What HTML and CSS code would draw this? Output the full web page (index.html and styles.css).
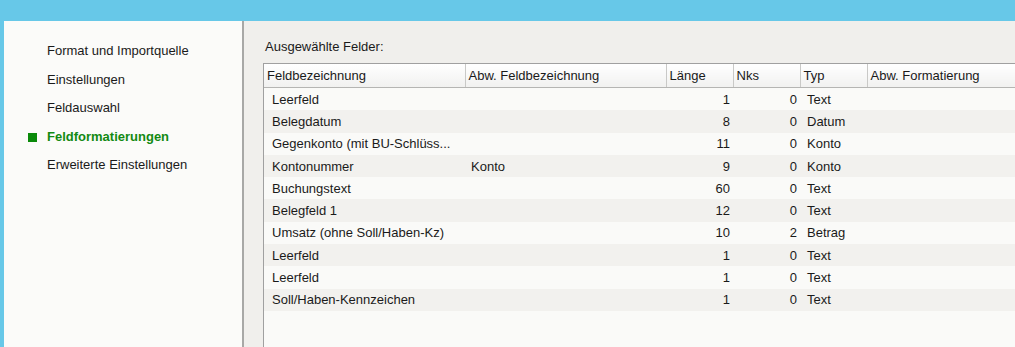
FILE: index.html
```html
<!DOCTYPE html>
<html lang="de">
<head>
  <meta charset="UTF-8" />
  <title>Feldformatierungen</title>
  <link rel="stylesheet" href="styles.css">
</head>
<body>
  <div class="titlebar"></div>
  <div class="window">
    <nav class="steps">
      <div class="step">Format und Importquelle</div>
      <div class="step">Einstellungen</div>
      <div class="step">Feldauswahl</div>
      <div class="step active"><span class="marker"></span>Feldformatierungen</div>
      <div class="step">Erweiterte Einstellungen</div>
    </nav>

    <main class="panel">
      <div class="caption">Ausgewählte Felder:</div>
      <div class="grid-box">
        <table class="grid">
          <colgroup>
            <col class="c-name">
            <col class="c-alt">
            <col class="c-num">
            <col class="c-num">
            <col class="c-num">
            <col class="c-fmt">
          </colgroup>
          <thead>
            <tr>
              <th>Feldbezeichnung</th>
              <th>Abw. Feldbezeichnung</th>
              <th>Länge</th>
              <th>Nks</th>
              <th>Typ</th>
              <th>Abw. Formatierung</th>
            </tr>
          </thead>
          <tbody>
            <tr><td>Leerfeld</td><td></td><td class="num">1</td><td class="num">0</td><td class="type">Text</td><td></td></tr>
            <tr><td>Belegdatum</td><td></td><td class="num">8</td><td class="num">0</td><td class="type">Datum</td><td></td></tr>
            <tr><td>Gegenkonto (mit BU-Schlüss...</td><td></td><td class="num">11</td><td class="num">0</td><td class="type">Konto</td><td></td></tr>
            <tr><td>Kontonummer</td><td>Konto</td><td class="num">9</td><td class="num">0</td><td class="type">Konto</td><td></td></tr>
            <tr><td>Buchungstext</td><td></td><td class="num">60</td><td class="num">0</td><td class="type">Text</td><td></td></tr>
            <tr><td>Belegfeld 1</td><td></td><td class="num">12</td><td class="num">0</td><td class="type">Text</td><td></td></tr>
            <tr><td>Umsatz (ohne Soll/Haben-Kz)</td><td></td><td class="num">10</td><td class="num">2</td><td class="type">Betrag</td><td></td></tr>
            <tr><td>Leerfeld</td><td></td><td class="num">1</td><td class="num">0</td><td class="type">Text</td><td></td></tr>
            <tr><td>Leerfeld</td><td></td><td class="num">1</td><td class="num">0</td><td class="type">Text</td><td></td></tr>
            <tr><td>Soll/Haben-Kennzeichen</td><td></td><td class="num">1</td><td class="num">0</td><td class="type">Text</td><td></td></tr>
          </tbody>
        </table>
      </div>
    </main>
  </div>
</body>
</html>
```

FILE: styles.css
```css
/* Window frame */
html, body {
  height: 100%;
}

body {
  margin: 0;
  background: #67c8e8;
  font-family: "Liberation Sans", Arial, sans-serif;
  font-size: 13px;
  color: #1a1a1a;
  overflow: hidden;
  display: flex;
  flex-direction: column;
}

.titlebar {
  height: 21px;
  flex: none;
}

.window {
  flex: 1;
  display: flex;
  margin-left: 4px;
  min-height: 0;
}

/* Step list */
.steps {
  width: 238px;
  flex: none;
  background: #fbfbf9;
  border-right: 2px solid #a8a8a6;
  padding-top: 16px;
}

.step {
  position: relative;
  padding-left: 43px;
  line-height: 28.5px;
}

.step.active {
  color: #128a12;
  font-weight: bold;
}

.marker {
  position: absolute;
  left: 24px;
  top: 10px;
  width: 9px;
  height: 9px;
  background: #0a8a0a;
}

/* Right panel */
.panel {
  flex: 1;
  background: #f0efec;
  padding: 12px 0 0 19px;
  min-width: 0;
  overflow: hidden;
}

.caption {
  height: 30px;
  line-height: 28px;
  padding-left: 2px;
}

.grid-box {
  height: 100%;
  background: #fafaf8;
  border-left: 1px solid #a0a0a0;
  border-top: 1px solid #a0a0a0;
}

.grid {
  border-collapse: collapse;
  table-layout: fixed;
  width: 900px;
}

.c-name { width: 201px; }
.c-alt { width: 201px; }
.c-num { width: 67px; }
.c-fmt { width: 297px; }

.grid th {
  height: 23px;
  padding: 0 0 0 3px;
  text-align: left;
  font-weight: normal;
  background: linear-gradient(#ffffff, #f1f1f0);
  border-right: 1px solid #c9c9c7;
  border-bottom: 1px solid #b5b5b3;
  white-space: nowrap;
  overflow: hidden;
}

.grid td {
  height: 22.3px;
  padding: 0 0 0 8px;
  white-space: nowrap;
  overflow: hidden;
}

.grid td:nth-child(2) {
  padding-left: 6px;
}

.grid tbody tr:nth-child(even) {
  background: #f2f1ee;
}

.grid td.num {
  text-align: right;
  padding: 0 3px 0 0;
}

.grid td.type {
  padding-left: 7px;
}
```
